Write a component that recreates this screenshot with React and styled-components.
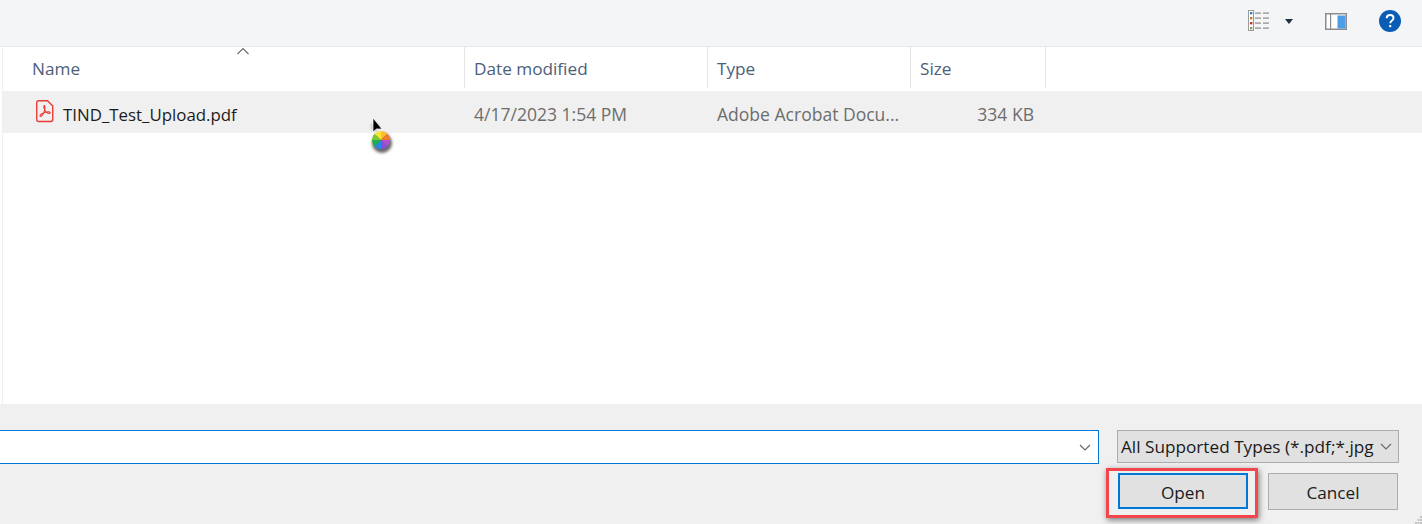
import React from 'react';
import styled, { createGlobalStyle } from 'styled-components';

const GlobalStyle = createGlobalStyle`
  html, body {
    margin: 0;
    padding: 0;
    background: #fff;
  }
  body {
    font-family: "Open Sans", "Noto Sans", "Liberation Sans", sans-serif;
  }
`;

const Dialog = styled.div`
  width: 1422px;
  height: 524px;
  display: flex;
  flex-direction: column;
  overflow: hidden;
  position: relative;
`;

const Toolbar = styled.div`
  height: 46px;
  flex: none;
  box-sizing: content-box;
  border-bottom: 1px solid #e8e9ea;
  background: #f4f5f7;
  display: flex;
  align-items: flex-start;
`;

const ViewButton = styled.div`
  margin-left: ${p => p.$left}px;
  margin-top: ${p => p.$top}px;
  display: flex;
  line-height: 0;
`;

const FileArea = styled.div`
  flex: 1;
  min-height: 0;
  margin-left: 2px;
  border-left: 1px solid #f0f0f0;
  background: #fff;
  display: flex;
  flex-direction: column;
  position: relative;
`;

const HeaderRow = styled.div`
  height: 44px;
  flex: none;
  display: flex;
  position: relative;
`;

const HeaderCell = styled.div`
  width: ${p => p.$width}px;
  height: 41px;
  box-sizing: border-box;
  padding: 10px 0 0 ${p => p.$pad}px;
  border-right: 1px solid #e5e5e5;
  color: #4c607a;
  font-size: 17.2px;
  line-height: 24px;
  white-space: nowrap;
`;

const SortArrow = styled.svg`
  position: absolute;
  left: 233px;
  top: 0;
`;

const FileRow = styled.div`
  height: 42px;
  flex: none;
  box-sizing: border-box;
  padding-top: 4px;
  background: #f0f0f0;
  display: flex;
  align-items: center;
`;

const NameCell = styled.div`
  width: 461px;
  box-sizing: border-box;
  padding-left: 33px;
  display: flex;
  align-items: center;
  gap: 9px;
  color: #1c1c1c;
  font-size: 16.85px;
  white-space: nowrap;
  svg {
    position: relative;
    top: -3px;
  }
`;

const Cell = styled.div`
  width: ${p => p.$width}px;
  box-sizing: border-box;
  padding-left: ${p => p.$pad || 0}px;
  padding-right: ${p => p.$right || 0}px;
  text-align: ${p => p.$align || 'left'};
  color: #6d6d6d;
  font-size: 17.55px;
  white-space: nowrap;
`;

const BusyCursor = styled.svg`
  position: absolute;
  left: 362px;
  top: 69px;
`;

const Footer = styled.div`
  height: 120px;
  flex: none;
  background: #f0f0f0;
  box-sizing: border-box;
  padding-top: 26px;
  position: relative;
`;

const InputRow = styled.div`
  display: flex;
  align-items: flex-start;
`;

const FileInput = styled.div`
  width: 1099px;
  height: 34px;
  box-sizing: border-box;
  background: #fff;
  border: 1px solid #0078d7;
  border-left: none;
  display: flex;
  align-items: center;
  justify-content: flex-end;
  padding-right: 7px;
`;

const TypeSelect = styled.div`
  width: 282px;
  height: 33px;
  margin-left: 18px;
  box-sizing: border-box;
  background: #e1e1e1;
  border: 1px solid #adadad;
  display: flex;
  align-items: center;
  padding: 0 6px 0 3px;
  color: #1a1a1a;
  font-size: 17.2px;
  white-space: nowrap;
`;

const TypeLabel = styled.span`
  flex: 1;
`;

const ButtonRow = styled.div`
  display: flex;
  align-items: flex-start;
  margin-top: 4px;
  padding-left: 1106px;
`;

const Highlight = styled.div`
  width: 152px;
  height: 50px;
  box-sizing: border-box;
  border: 3px solid #f4444c;
  box-shadow: 1px 2px 6px rgba(0, 0, 0, 0.5);
  padding: 2px 0 0 9px;
`;

const Button = styled.button`
  width: 130px;
  height: ${p => (p.$primary ? 36 : 37)}px;
  box-sizing: border-box;
  margin: 0;
  padding: 2px 0 0;
  background: #e1e1e1;
  border: ${p => (p.$primary ? '2px solid #0078d7' : '1px solid #adadad')};
  color: #1a1a1a;
  font-family: inherit;
  font-size: 17.2px;
`;

const CancelButton = styled(Button)`
  margin: 5px 0 0 10px;
`;

const Grip = styled.svg`
  position: absolute;
  right: 0;
  bottom: 0;
`;

function ListViewIcon() {
  const marks = ['#3d7fc1', '#b5803a', '#c8342c', '#8aa34a'];
  return (
    <svg width="22" height="21" viewBox="0 0 22 21">
      <rect x="0.5" y="0.5" width="5" height="20" fill="#fff" stroke="#9a9a9a" />
      {marks.map((c, i) => (
        <g key={c}>
          <rect x="2" y={2 + i * 5} width="2.4" height="2.4" fill={c} />
          <rect x="7" y={2.5 + i * 5} width="6" height="1.2" fill="#8b8b8b" />
          <rect x="15" y={2.5 + i * 5} width="6" height="1.2" fill="#8b8b8b" />
        </g>
      ))}
    </svg>
  );
}

function PaneIcon() {
  return (
    <svg width="22" height="17" viewBox="0 0 22 17">
      <rect x="0.75" y="0.75" width="20.5" height="15.5" fill="#fff" stroke="#8c8c8c" strokeWidth="1.5" />
      <rect x="5" y="1" width="1.2" height="15" fill="#8c8c8c" />
      <rect x="12.5" y="2.5" width="8" height="13" fill="#4a9fe6" />
      <rect x="16" y="1" width="4" height="1" fill="#cfcfcf" />
    </svg>
  );
}

function HelpIcon() {
  return (
    <svg width="22" height="22" viewBox="0 0 22 22">
      <circle cx="11" cy="11" r="11" fill="#0a5db5" />
      <path
        d="M7.7 8.2c0-2 1.4-3.2 3.4-3.2s3.4 1.2 3.4 3c0 1.3-.7 2-1.7 2.7-1 .7-1.5 1.2-1.5 2.5"
        fill="none"
        stroke="#fff"
        strokeWidth="1.9"
      />
      <rect x="10.2" y="15" width="2" height="2.2" fill="#fff" />
    </svg>
  );
}

function PdfIcon() {
  return (
    <svg width="18" height="23" viewBox="0 0 18 23" fill="none" stroke="#ea3a34">
      <path d="M2.5 .75h9l5.25 5.25v13.5a2 2 0 0 1-2 2H2.5a1.75 1.75 0 0 1-1.75-1.75V2.5A1.75 1.75 0 0 1 2.5.75z" strokeWidth="1.4" />
      <path
        d="M8.3 5.5c-.9.4-.3 3 .5 4.6.8 1.6 2.2 3 3.4 3.2 1.2.2 2.3-.1 2-.9-.3-.8-2.6-.7-4.6-.2s-4.8 1.6-5.5 3c-.5 1.1.7 1.5 1.6.7 1.3-1.2 2.6-3.8 3-6 .3-1.8.2-4.6-.4-4.4z"
        strokeWidth="1.1"
      />
    </svg>
  );
}

function Chevron() {
  return (
    <svg width="12" height="7" viewBox="0 0 12 7" fill="none" stroke="#666" strokeWidth="1.1">
      <path d="M1 1l5 5 5-5" />
    </svg>
  );
}

function Cursor() {
  const slices = [
    ['#fbc02d', 'M9 9L9 0A9 9 0 0 1 15.4 2.6z'],
    ['#f4792b', 'M9 9L15.4 2.6A9 9 0 0 1 18 9z'],
    ['#b04fd0', 'M9 9L18 9A9 9 0 0 1 15.4 15.4z'],
    ['#8a4fd8', 'M9 9L15.4 15.4A9 9 0 0 1 9 18z'],
    ['#2485ea', 'M9 9L9 18A9 9 0 0 1 2.6 15.4z'],
    ['#1fae4a', 'M9 9L2.6 15.4A9 9 0 0 1 0 9z'],
    ['#7cc92f', 'M9 9L0 9A9 9 0 0 1 2.6 2.6z'],
    ['#fde23a', 'M9 9L2.6 2.6A9 9 0 0 1 9 0z'],
  ];
  return (
    <BusyCursor width="32" height="40" viewBox="0 0 32 40">
      <defs>
        <filter id="soft" x="-40%" y="-40%" width="180%" height="180%">
          <feGaussianBlur stdDeviation="1.8" />
        </filter>
      </defs>
      <circle cx="10" cy="11" r="4" fill="#000" opacity="0.2" filter="url(#soft)" />
      <circle cx="17" cy="27" r="10" fill="#000" opacity="0.6" filter="url(#soft)" />
      <path d="M8 2v14l3.4-3 5.6 0z" fill="#000" stroke="#fff" strokeWidth="0.7" />
      <g transform="translate(7 15)">
        {slices.map(([c, d]) => (
          <path key={c} d={d} fill={c} />
        ))}
      </g>
    </BusyCursor>
  );
}

export default function App() {
  return (
    <Dialog>
      <GlobalStyle />
      <Toolbar>
        <ViewButton $left={1248} $top={10}>
          <ListViewIcon />
        </ViewButton>
        <ViewButton $left={15} $top={19}>
          <svg width="8" height="5" viewBox="0 0 8 5">
            <path d="M0 0h8L4 5z" fill="#1f2f44" />
          </svg>
        </ViewButton>
        <ViewButton $left={32} $top={13}>
          <PaneIcon />
        </ViewButton>
        <ViewButton $left={32} $top={10}>
          <HelpIcon />
        </ViewButton>
      </Toolbar>

      <FileArea>
        <HeaderRow>
          <SortArrow width="14" height="8" viewBox="0 0 14 8" fill="none" stroke="#6a6a6a" strokeWidth="1.1">
            <path d="M1.5 7L7 1.5 12.5 7" />
          </SortArrow>
          <HeaderCell $width={462} $pad={29}>Name</HeaderCell>
          <HeaderCell $width={243} $pad={9}>Date modified</HeaderCell>
          <HeaderCell $width={203} $pad={9}>Type</HeaderCell>
          <HeaderCell $width={135} $pad={9}>Size</HeaderCell>
        </HeaderRow>
        <FileRow>
          <NameCell>
            <PdfIcon />
            <span>TIND_Test_Upload.pdf</span>
          </NameCell>
          <Cell $width={243} $pad={10}>4/17/2023 1:54 PM</Cell>
          <Cell $width={203} $pad={10}>Adobe Acrobat Docu...</Cell>
          <Cell $width={135} $align="right" $right={11}>334 KB</Cell>
        </FileRow>
        <Cursor />
      </FileArea>

      <Footer>
        <InputRow>
          <FileInput>
            <Chevron />
          </FileInput>
          <TypeSelect>
            <TypeLabel>All Supported Types (*.pdf;*.jpg</TypeLabel>
            <Chevron />
          </TypeSelect>
        </InputRow>
        <ButtonRow>
          <Highlight>
            <Button $primary>Open</Button>
          </Highlight>
          <CancelButton>Cancel</CancelButton>
        </ButtonRow>
        <Grip width="7" height="8" viewBox="0 0 7 8" fill="#c4c4c4">
          <rect x="5" y="0" width="2" height="2" />
          <rect x="2.5" y="3" width="2" height="2" />
          <rect x="5" y="3" width="2" height="2" />
          <rect x="0" y="6" width="2" height="2" />
          <rect x="2.5" y="6" width="2" height="2" />
          <rect x="5" y="6" width="2" height="2" />
        </Grip>
      </Footer>
    </Dialog>
  );
}
